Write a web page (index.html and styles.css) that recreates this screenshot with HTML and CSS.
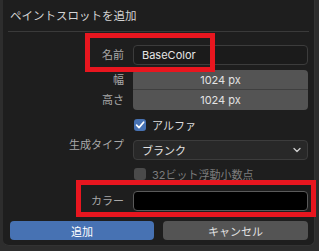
FILE: index.html
```html
<!DOCTYPE html>
<html lang="ja">
<head>
  <meta charset="UTF-8">
  <title>ペイントスロットを追加</title>
  <link rel="stylesheet" href="styles.css">
</head>
<body>
  <div class="backdrop">
    <div class="dialog">
      <div class="title">ペイントスロットを追加</div>
      <div class="rule"></div>

      <div class="form">
        <div class="label row-name">名前</div>
        <div class="text-field row-name">BaseColor</div>

        <div class="label row-w">幅</div>
        <div class="num-field top row-w">1024 px</div>
        <div class="label row-h">高さ</div>
        <div class="num-field bottom row-h">1024 px</div>

        <div class="check-row row-alpha">
          <span class="box on">
            <svg width="10" height="10" viewBox="0 0 10 10"><path d="M1.6 5.2 L4 7.6 L8.6 2.2" fill="none" stroke="#fff" stroke-width="1.7" stroke-linecap="round" stroke-linejoin="round"/></svg>
          </span>
          <span>アルファ</span>
        </div>

        <div class="label row-type">生成タイプ</div>
        <div class="select row-type">
          <span>ブランク</span>
          <svg width="8" height="6" viewBox="0 0 8 6"><path d="M1 1.5 L4 4.5 L7 1.5" fill="none" stroke="#cfcfcf" stroke-width="1.3" stroke-linecap="round" stroke-linejoin="round"/></svg>
        </div>

        <div class="check-row dim row-float">
          <span class="box"></span>
          <span>32ビット浮動小数点</span>
        </div>

        <div class="label row-color">カラー</div>
        <div class="color-field row-color"></div>
      </div>

      <div class="buttons">
        <button class="btn primary">追加</button>
        <button class="btn">キャンセル</button>
      </div>
    </div>

    <!-- annotations drawn over the dialog -->
    <div class="mark mark-name"></div>
    <div class="mark mark-color"></div>
  </div>
</body>
</html>
```

FILE: styles.css
```css
body { margin: 0; background: #2d2d2d; font-family: Inter, "Noto Sans CJK JP", sans-serif; font-size: 11px; overflow: hidden; }
.backdrop { position: relative; width: 319px; height: 251px; background: #2d2d2d; }
.dialog { margin-left: 3px; width: 312px; height: 246px; background: #1e1e1e; border-right: 1px solid #333; border-bottom: 1px solid #333; border-radius: 0 0 6px 6px; box-sizing: border-box; }

.title { height: 31px; line-height: 32px; padding-left: 7px; color: #d4d4d4; font-size: 11.5px; }
.rule { height: 1px; margin: 0 5px; background: #3a3a3a; }

.form { display: grid; grid-template-columns: 121px 175px; column-gap: 9px; grid-auto-rows: auto; padding-top: 13px; }
.label { text-align: right; color: #a9a9a9; line-height: 20px; }

.row-name { grid-row: 1; }
.row-w { grid-row: 2; margin-top: 5px; }
.row-h { grid-row: 3; }
.row-alpha { grid-row: 4; }
.row-type { grid-row: 5; }
.row-float { grid-row: 6; }
.row-color { grid-row: 7; margin-top: 7px; }

.text-field { grid-column: 2; height: 20px; line-height: 19px; padding-left: 8px; box-sizing: border-box; border: 1px solid #3c3c3c; border-radius: 4px; background: #1b1b1b; color: #e6e6e6; }
.num-field { grid-column: 2; height: 20px; line-height: 20px; text-align: center; background: #545454; color: #e2e2e2; }
.num-field.top { border-radius: 4px 4px 0 0; border-bottom: 1px solid #3f3f3f; height: 20px; box-sizing: border-box; line-height: 21px; }
.num-field.bottom { border-radius: 0 0 4px 4px; }

.check-row { grid-column: 2; display: flex; align-items: center; gap: 6px; height: 20px; margin-left: 1px; color: #dcdcdc; }
.row-alpha { margin-top: 5px; }
.row-float { margin-top: 4px; }
.box { width: 12px; height: 12px; border-radius: 3px; background: #4f4f4f; display: flex; align-items: center; justify-content: center; }
.box.on { background: #4772b3; }
.check-row.dim { color: #7c7c7c; }
.check-row.dim .box { background: #4a4a4a; }

.select { grid-column: 2; display: flex; justify-content: space-between; align-items: center; height: 20px; padding: 0 6px 0 8px; box-sizing: border-box; border: 1px solid #3c3c3c; border-radius: 4px; background: #282828; color: #e2e2e2; margin-top: 5px; }

.color-field { grid-column: 2; height: 20px; border: 1px solid #5a5a5a; border-radius: 4px; background: #000; box-sizing: border-box; }

.buttons { display: flex; gap: 9px; padding: 10px 0 0 7px; }
.btn { height: 19px; padding: 0; border: none; border-radius: 4px; font-family: inherit; font-size: 11px; color: #e2e2e2; background: #545454; }
.btn.primary { width: 144px; background: #4772b3; color: #fff; }
.btn:not(.primary) { width: 145px; }

.mark { position: absolute; border: 5px solid #e8161f; box-sizing: border-box; }
.mark-name { left: 85px; top: 33px; width: 130px; height: 39px; }
.mark-color { left: 76px; top: 180px; width: 240px; height: 37px; }
```
